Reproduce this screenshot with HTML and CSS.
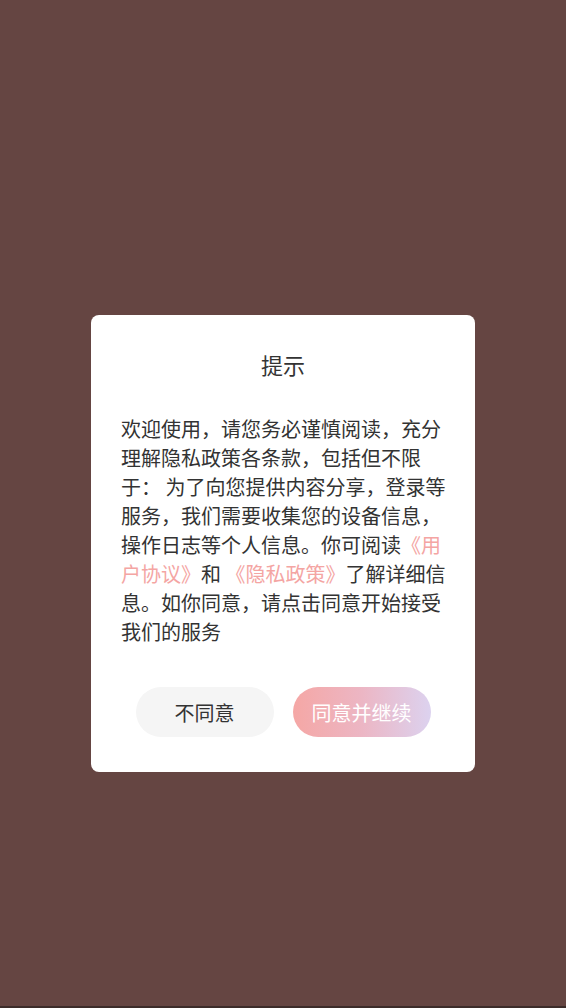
FILE: index.html
```html
<!DOCTYPE html>
<html lang="zh-CN">
<head>
<meta charset="utf-8">
<title>提示</title>
<link rel="stylesheet" href="styles.css">
</head>
<body>
<div class="screen">
  <div class="dialog">
    <h1 class="title">提示</h1>
    <p class="content">欢迎使用，请您务必谨慎阅读，充分理解隐私政策各条款，包括但不限于： 为了向您提供内容分享，登录等服务，我们需要收集您的设备信息，操作日志等个人信息。你可阅读<span class="link">《用</span><span class="link">户协议》</span>和 <span class="link">《隐私政策》</span>了解详细信息。如你同意，请点击同意开始接受我们的服务</p>
    <div class="actions">
      <button class="btn btn-cancel">不同意</button>
      <button class="btn btn-ok">同意并继续</button>
    </div>
  </div>
</div>
</body>
</html>
```
FILE: styles.css
```css
* { box-sizing: border-box; }
html, body {
  margin: 0;
  padding: 0;
}
body {
  background: #654542;
  font-family: "Noto Sans CJK SC", "Noto Sans", sans-serif;
  color: #333333;
}
.screen {
  height: 1008px;
  padding-top: 315px;
  border-bottom: 2px solid #3c2c2a;
}
.dialog {
  width: 384px;
  margin-left: 91px;
  height: 457px;
  background: #ffffff;
  border-radius: 8px;
  padding: 34px 26px 35px 30px;
  display: flex;
  flex-direction: column;
}
.title {
  margin: 0;
  font-size: 22px;
  font-weight: normal;
  line-height: 30px;
  text-align: center;
  padding-right: 4px;
  color: #333333;
}
.content {
  margin: 35px 0 0 0;
  font-size: 20px;
  line-height: 29px;
  color: #333333;
}
.link {
  color: #f4a5a3;
}
.actions {
  margin-top: auto;
  display: flex;
  justify-content: center;
  gap: 19px;
  padding-right: 4px;
}
.btn {
  width: 138px;
  height: 50px;
  border: none;
  border-radius: 25px;
  font-family: inherit;
  font-size: 20px;
  padding: 0;
}
.btn-cancel {
  background: #f5f5f5;
  color: #333333;
}
.btn-ok {
  background: linear-gradient(90deg, #f5a7a5 0%, #ecb6c4 50%, #dcd2ef 100%);
  color: #ffffff;
}
```
